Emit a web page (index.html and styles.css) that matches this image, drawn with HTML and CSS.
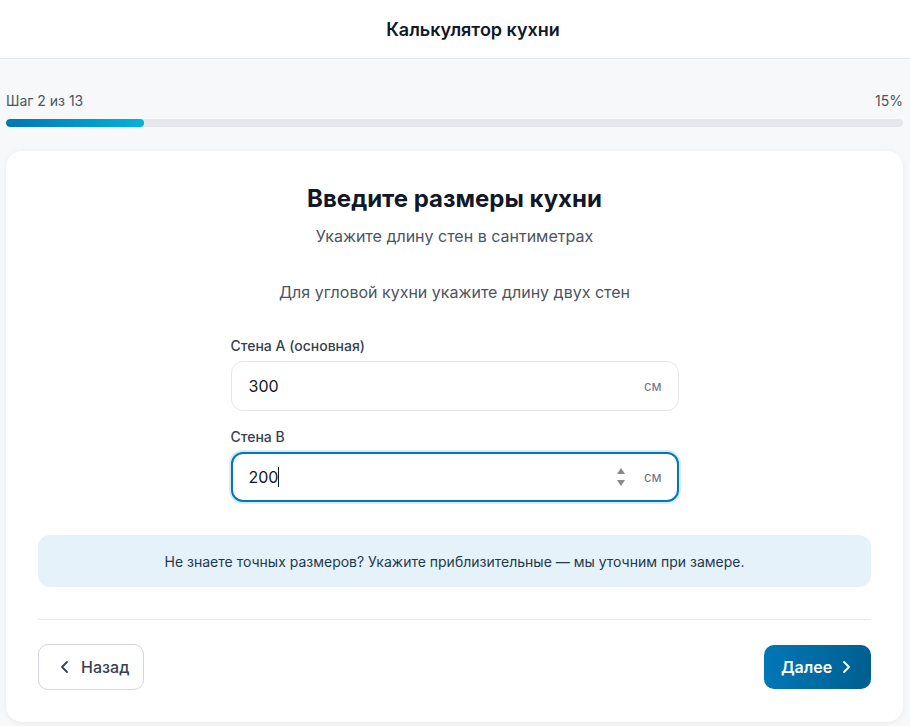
FILE: index.html
```html
<!DOCTYPE html>
<html lang="ru">
<head>
<meta charset="utf-8">
<title>Калькулятор кухни</title>
<link rel="stylesheet" href="styles.css">
</head>
<body>
<header class="topbar">
  <h1 class="topbar-title">Калькулятор кухни</h1>
</header>
<main class="main">
  <div class="progress">
    <div class="progress-labels">
      <span>Шаг 2 из 13</span>
      <span>15%</span>
    </div>
    <div class="progress-track"><div class="progress-fill" style="width:15.4%"></div></div>
  </div>
  <section class="card">
    <h2 class="card-title">Введите размеры кухни</h2>
    <p class="card-sub">Укажите длину стен в сантиметрах</p>
    <p class="card-hint">Для угловой кухни укажите длину двух стен</p>
    <div class="fields">
      <label class="field">
        <span class="field-label">Стена А (основная)</span>
        <span class="input-wrap">
          <input class="input" type="text" value="300">
          <span class="unit">см</span>
        </span>
      </label>
      <label class="field">
        <span class="field-label">Стена B</span>
        <span class="input-wrap focused">
          <input class="input" type="text" value="200">
          <span class="caret"></span>
          <svg class="spinner" width="10" height="22" viewBox="0 0 10 22"><path d="M5 2 L9 8 L1 8 Z" fill="#8a8a8a"/><path d="M1 14 L9 14 L5 20 Z" fill="#8a8a8a"/></svg>
          <span class="unit">см</span>
        </span>
      </label>
    </div>
    <div class="info">Не знаете точных размеров? Укажите приблизительные — мы уточним при замере.</div>
    <hr class="divider">
    <div class="actions">
      <button class="btn btn-back" type="button">
        <svg width="16" height="16" viewBox="0 0 16 16"><path d="M10 3 L5 8 L10 13" fill="none" stroke="#374151" stroke-width="1.8" stroke-linecap="round" stroke-linejoin="round"/></svg>
        Назад
      </button>
      <button class="btn btn-next" type="button">
        Далее
        <svg width="16" height="16" viewBox="0 0 16 16"><path d="M6 3 L11 8 L6 13" fill="none" stroke="#fff" stroke-width="1.8" stroke-linecap="round" stroke-linejoin="round"/></svg>
      </button>
    </div>
  </section>
</main>
</body>
</html>
```
FILE: styles.css
```css
* { box-sizing: border-box; }
html, body { margin: 0; padding: 0; }
body {
  font-family: Inter, "Noto Sans", sans-serif;
  background: #f7f8fa;
  color: #111827;
}
.topbar {
  height: 59px;
  background: #fff;
  border-bottom: 1px solid #e5e7eb;
  display: flex;
  align-items: center;
  justify-content: center;
  padding-left: 36px;
}
.topbar-title {
  margin: 0;
  font-size: 18px;
  font-weight: 600;
  color: #111827;
}
.main {
  padding: 32px 7px 4px 6px;
}
.progress-labels {
  display: flex;
  justify-content: space-between;
  font-size: 14px;
  line-height: 20px;
  color: #4b5563;
  margin-bottom: 8px;
}
.progress-track {
  height: 8px;
  background: #e5e7eb;
  border-radius: 4px;
  overflow: hidden;
}
.progress-fill {
  height: 100%;
  border-radius: 4px;
  background: linear-gradient(90deg, #0077b6, #00b4d8);
}
.card {
  margin-top: 24px;
  background: #fff;
  border-radius: 16px;
  box-shadow: 0 1px 6px rgba(0,0,0,0.06);
  padding: 32px;
}
.card-title {
  margin: 0;
  text-align: center;
  font-size: 24px;
  line-height: 32px;
  font-weight: 700;
  color: #111827;
}
.card-sub {
  margin: 10px 0 0;
  text-align: center;
  font-size: 16px;
  line-height: 22px;
  color: #4b5563;
}
.card-hint {
  margin: 34px 0 0;
  text-align: center;
  font-size: 16px;
  line-height: 22px;
  color: #4b5563;
}
.fields {
  width: 448px;
  margin: 34px auto 0;
  display: flex;
  flex-direction: column;
  gap: 17px;
}
.field {
  display: flex;
  flex-direction: column;
  gap: 6px;
}
.field-label {
  font-size: 14px;
  line-height: 18px;
  font-weight: 500;
  color: #374151;
}
.input-wrap {
  position: relative;
  display: flex;
  align-items: center;
  height: 50px;
  border: 1px solid #e5e7eb;
  border-radius: 12px;
  padding: 0 16px 0 17px;
  background: #fff;
}
.input-wrap.focused {
  border: 2px solid #0077b6;
  box-shadow: 0 0 0 2px rgba(0,119,182,0.15);
  padding: 0 15px 0 16px;
}
.input {
  flex: 1;
  min-width: 0;
  border: 0;
  outline: none;
  font: inherit;
  font-size: 16px;
  color: #111827;
  padding: 0;
  background: transparent;
}
.focused .input { flex: 0 0 auto; width: 29px; }
.caret {
  width: 1px;
  height: 20px;
  background: #111827;
  margin-right: auto;
}
.spinner { margin-right: 18px; }
.unit {
  font-size: 13px;
  color: #6b7280;
}
.info {
  margin-top: 33px;
  height: 52px;
  display: flex;
  align-items: center;
  justify-content: center;
  background: #e6f2f9;
  border-radius: 12px;
  font-size: 14px;
  color: #1f3a4d;
}
.divider {
  margin: 32px 0 0;
  border: 0;
  border-top: 1px solid #e5e7eb;
}
.actions {
  margin-top: 24px;
  display: flex;
  justify-content: space-between;
  align-items: center;
}
.btn {
  height: 46px;
  border-radius: 10px;
  display: flex;
  align-items: center;
  gap: 6px;
  font-family: inherit;
  font-size: 16px;
  font-weight: 500;
  cursor: pointer;
}
.btn-back {
  width: 106px;
  justify-content: flex-start;
  background: #fff;
  border: 1px solid #d1d5db;
  color: #374151;
  padding: 0 0 0 18px;
  gap: 8px;
}
.btn-next {
  width: 107px;
  height: 44px;
  justify-content: center;
  border: 0;
  color: #fff;
  font-weight: 600;
  background: linear-gradient(90deg, #0077b6, #005f8f);
}
```
